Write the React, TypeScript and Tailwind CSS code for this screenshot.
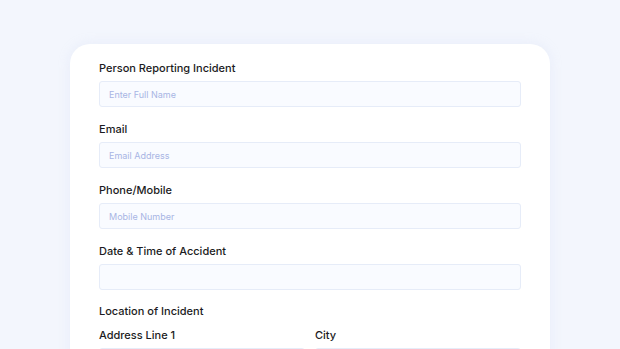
const fields = [
    { label: "Person Reporting Incident", placeholder: "Enter Full Name" },
    { label: "Email", placeholder: "Email Address" },
    { label: "Phone/Mobile", placeholder: "Mobile Number" },
    { label: "Date & Time of Accident", placeholder: "" },
]

function Field({ label, placeholder }: { label: string; placeholder: string }) {
    return (
        <div className="flex flex-col">
            <label className="text-[11px] leading-4 font-medium text-[#1b1b22]">{label}</label>
            <input
                type="text"
                placeholder={placeholder}
                className="mt-[5px] h-[26px] w-full rounded-[3px] border border-[#e6ecf8] bg-[#f9fbff] px-[9px] text-[9px] text-[#1b1b22] placeholder:text-[#a8b5e4] outline-none"
            />
        </div>
    )
}

export default function App() {
    return (
        <div className="h-[349px] w-full overflow-hidden bg-[#f3f6fd] pt-[44px]" style={{ fontFamily: "Inter, 'Open Sans', sans-serif" }}>
            <div className="mx-auto w-[480px] rounded-[20px] bg-white px-[29px] pt-4 pb-8 shadow-[0_0_12px_rgba(200,210,240,0.25)]">
                <div className="flex flex-col gap-[14px]">
                    {fields.map((f) => (
                        <Field key={f.label} label={f.label} placeholder={f.placeholder} />
                    ))}
                </div>
                <div className="mt-[13px] text-[11px] leading-4 font-medium text-[#1b1b22]">Location of Incident</div>
                <div className="mt-2 grid grid-cols-2 gap-x-[10px]">
                    <Field label="Address Line 1" placeholder="" />
                    <Field label="City" placeholder="" />
                </div>
            </div>
        </div>
    )
}
